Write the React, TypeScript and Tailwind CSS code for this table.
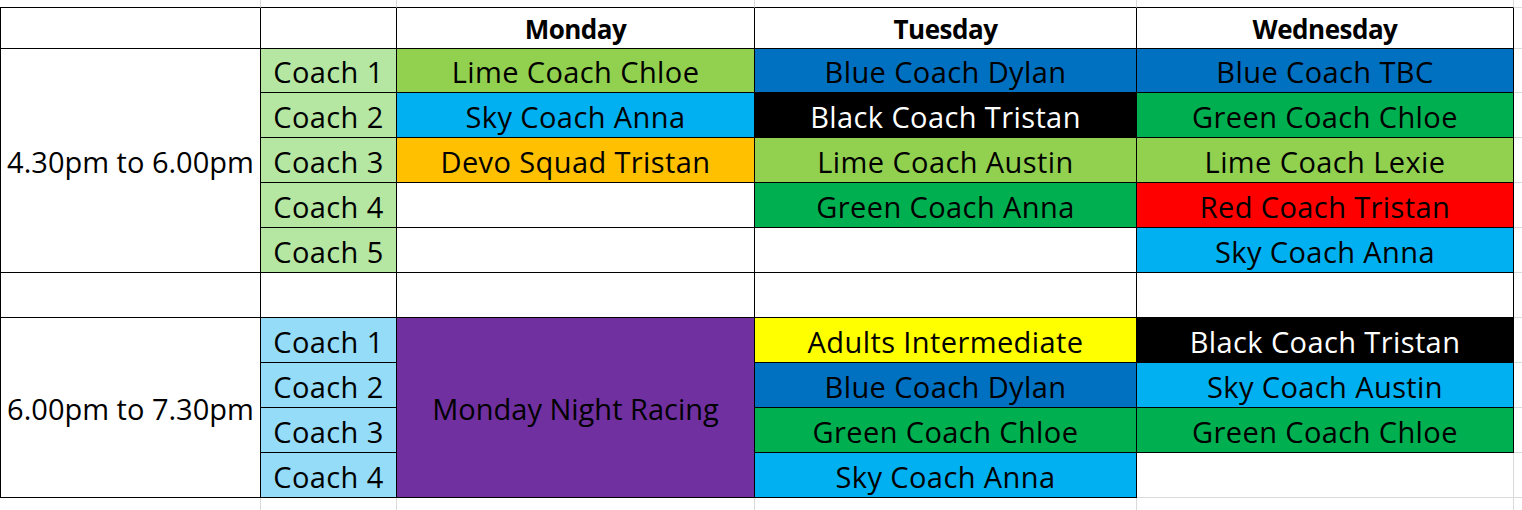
import React from "react";

type CellProps = {
  children?: React.ReactNode;
  className?: string;
};

const font = { fontFamily: '"Open Sans", "Noto Sans", sans-serif' };

function Cell({ children, className = "" }: CellProps) {
  return (
    <div
      className={`flex items-center justify-center whitespace-nowrap leading-none text-[29px] tracking-[0.4px] text-black border-r border-b border-black pt-[2px] ${className}`}
    >
      {children}
    </div>
  );
}

function Head({ children }: { children: React.ReactNode }) {
  return (
    <div className="flex items-center justify-center whitespace-nowrap leading-none text-[26px] font-bold tracking-[-0.5px] text-black border-r border-b border-black pt-[1px]">
      {children}
    </div>
  );
}

function Grid() {
  return <div className="border-b border-[#dadada]" />;
}

export default function App() {
  return (
    <div className="w-[1522px] h-[510px] bg-white overflow-hidden" style={font}>
      <div className="grid grid-cols-[261px_136px_358px_382px_377px_8px] grid-rows-[8px_41px_44px_repeat(9,45px)_12px]">
        {/* top strip */}
        <div className="border-r border-b border-r-[#dadada] border-b-black" />
        <div className="border-r border-b border-r-[#dadada] border-b-black" />
        <div className="border-r border-b border-r-[#dadada] border-b-black" />
        <div className="border-r border-b border-r-[#dadada] border-b-black" />
        <div className="border-r border-b border-r-[#dadada] border-b-black" />
        <Grid />

        {/* header */}
        <Cell className="border-l" />
        <Cell />
        <Head>Monday</Head>
        <Head>Tuesday</Head>
        <Head>Wednesday</Head>
        <Grid />

        {/* afternoon */}
        <Cell className="row-span-5 border-l tracking-normal">4.30pm to 6.00pm</Cell>
        <Cell className="bg-[#b5e6a2]">Coach 1</Cell>
        <Cell className="bg-[#92d050]">Lime Coach Chloe</Cell>
        <Cell className="bg-[#0070c0]">Blue Coach Dylan</Cell>
        <Cell className="bg-[#0070c0]">Blue Coach TBC</Cell>
        <Grid />

        <Cell className="bg-[#b5e6a2]">Coach 2</Cell>
        <Cell className="bg-[#00b0f0]">Sky Coach Anna</Cell>
        <Cell className="bg-black text-white">Black Coach Tristan</Cell>
        <Cell className="bg-[#00b050]">Green Coach Chloe</Cell>
        <Grid />

        <Cell className="bg-[#b5e6a2]">Coach 3</Cell>
        <Cell className="bg-[#ffc000]">Devo Squad Tristan</Cell>
        <Cell className="bg-[#92d050]">Lime Coach Austin</Cell>
        <Cell className="bg-[#92d050]">Lime Coach Lexie</Cell>
        <Grid />

        <Cell className="bg-[#b5e6a2]">Coach 4</Cell>
        <Cell />
        <Cell className="bg-[#00b050]">Green Coach Anna</Cell>
        <Cell className="bg-[#ff0000]">Red Coach Tristan</Cell>
        <Grid />

        <Cell className="bg-[#b5e6a2]">Coach 5</Cell>
        <Cell />
        <Cell />
        <Cell className="bg-[#00b0f0]">Sky Coach Anna</Cell>
        <Grid />

        {/* spacer */}
        <Cell className="border-l" />
        <Cell />
        <Cell />
        <Cell />
        <Cell />
        <Grid />

        {/* evening */}
        <Cell className="row-span-4 border-l tracking-normal">6.00pm to 7.30pm</Cell>
        <Cell className="bg-[#94dcf8]">Coach 1</Cell>
        <Cell className="row-span-4 bg-[#7030a0] tracking-normal">Monday Night Racing</Cell>
        <Cell className="bg-[#ffff00]">Adults Intermediate</Cell>
        <Cell className="bg-black text-white">Black Coach Tristan</Cell>
        <Grid />

        <Cell className="bg-[#94dcf8]">Coach 2</Cell>
        <Cell className="bg-[#0070c0]">Blue Coach Dylan</Cell>
        <Cell className="bg-[#00b0f0]">Sky Coach Austin</Cell>
        <Grid />

        <Cell className="bg-[#94dcf8]">Coach 3</Cell>
        <Cell className="bg-[#00b050]">Green Coach Chloe</Cell>
        <Cell className="bg-[#00b050]">Green Coach Chloe</Cell>
        <Grid />

        <Cell className="bg-[#94dcf8]">Coach 4</Cell>
        <Cell className="bg-[#00b0f0]">Sky Coach Anna</Cell>
        <div className="border-r border-b border-[#dadada]" />
        <Grid />

        {/* bottom strip */}
        <div className="border-r border-[#dadada]" />
        <div className="border-r border-[#dadada]" />
        <div className="border-r border-[#dadada]" />
        <div className="border-r border-[#dadada]" />
        <div className="border-r border-[#dadada]" />
        <div />
      </div>
    </div>
  );
}
